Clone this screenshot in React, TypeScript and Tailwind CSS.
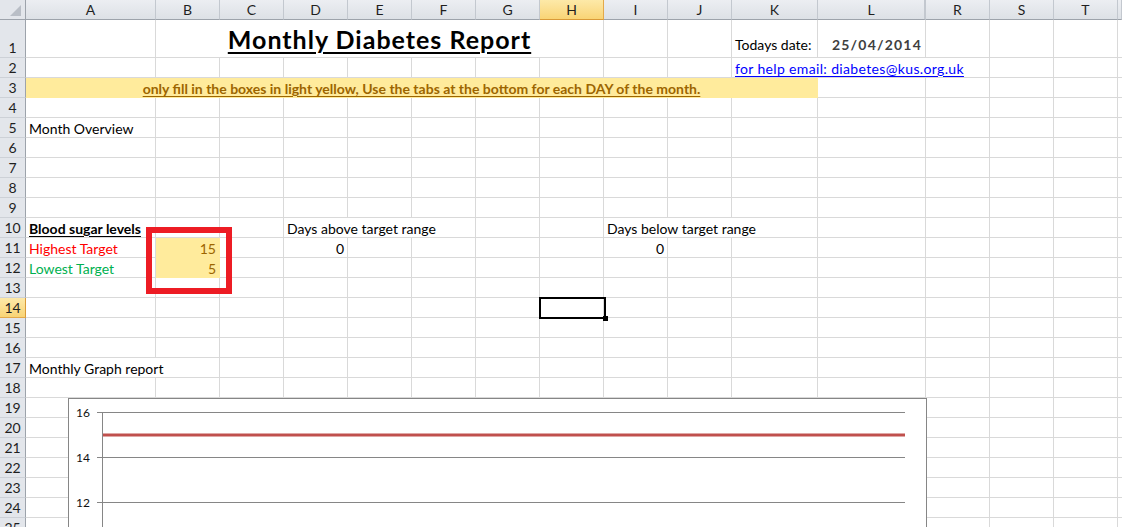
import React from "react";

type Cell = { c: number; span?: string; cls?: string; content?: React.ReactNode };

const COLS = ["A", "B", "C", "D", "E", "F", "G", "H", "I", "J", "K", "L", "R", "S", "T", ""];

const YEL = "bg-[#ffeb9c] border-r-[#ffeb9c] border-b-[#ffeb9c]";

const DATA: Record<number, Cell[]> = {
  1: [
    {
      c: 1,
      span: "col-span-7",
      cls: "justify-center pb-[4px]",
      content: (
        <span className="text-[25px] leading-[28px] font-bold tracking-[1px] underline decoration-2 underline-offset-[3px] text-black">
          Monthly Diabetes Report
        </span>
      ),
    },
    { c: 10, cls: "pb-[4px]", content: "Todays date:" },
    { c: 11, cls: "justify-end pb-[4px] font-bold text-[#3f3f3f] tracking-[1.2px]", content: "25/04/2014" },
  ],
  2: [
    {
      c: 10,
      span: "col-span-3",
      content: (
        <span className="text-[#0000ff] underline underline-offset-[2px] tracking-[0.35px]">
          for help email: diabetes@kus.org.uk
        </span>
      ),
    },
  ],
  3: [
    {
      c: 0,
      span: "col-span-11",
      cls: `justify-center ${YEL}`,
      content: (
        <span className="font-bold underline underline-offset-[2px] text-[#9c6500]">
          only fill in the boxes in light yellow, Use the tabs at the bottom for each DAY of the month.
        </span>
      ),
    },
  ],
  5: [{ c: 0, content: "Month Overview" }],
  10: [
    { c: 0, content: <span className="font-bold underline underline-offset-[2px]">Blood sugar levels</span> },
    { c: 3, span: "col-span-3", content: "Days above target range" },
    { c: 8, span: "col-span-3", content: "Days below target range" },
  ],
  11: [
    { c: 0, cls: "text-[#ff0000]", content: "Highest Target" },
    { c: 1, cls: `justify-end text-[#9c6500] ${YEL}`, content: "15" },
    { c: 3, cls: "justify-end", content: "0" },
    { c: 8, cls: "justify-end", content: "0" },
  ],
  12: [
    { c: 0, cls: "text-[#00b050]", content: "Lowest Target" },
    { c: 1, cls: `justify-end text-[#9c6500] ${YEL}`, content: "5" },
  ],
  17: [{ c: 0, span: "col-span-2", content: "Monthly Graph report" }],
};

const SPAN_N: Record<string, number> = {
  "col-span-2": 2,
  "col-span-3": 3,
  "col-span-7": 7,
  "col-span-11": 11,
};

function Chart() {
  const ys = [
    { v: "16", y: 13.5 },
    { v: "14", y: 58.5 },
    { v: "12", y: 103.5 },
  ];
  return (
    <div className="absolute left-[68px] top-[398px] w-[859px] h-[140px] border border-[#868686] bg-white">
      <svg width="857" height="138" className="block">
        {ys.map((t) => (
          <g key={t.v}>
            <line x1="28" x2="836" y1={t.y} y2={t.y} stroke="#868686" strokeWidth="1" />
            <text
              x="21"
              y={t.y + 4}
              textAnchor="end"
              fontSize="12"
              fill="#111"
              fontFamily="Lato, 'Liberation Sans', sans-serif"
            >
              {t.v}
            </text>
          </g>
        ))}
        <line x1="33.5" x2="33.5" y1="13" y2="138" stroke="#868686" strokeWidth="1" />
        <line x1="34" x2="836" y1="36" y2="36" stroke="#c0504d" strokeWidth="3" />
      </svg>
    </div>
  );
}

export default function App() {
  const rows: number[] = [];
  for (let r = 1; r <= 25; r++) rows.push(r);

  const colHead =
    "flex items-center justify-center text-[14px] text-[#1f1f1f] bg-gradient-to-b from-[#eceef2] to-[#dde1e6] border-r border-b border-r-[#c3c8cf] border-b-[#9da3ab]";
  const colHeadSel =
    "flex items-center justify-center text-[14px] text-[#1f1f1f] bg-gradient-to-b from-[#fde9a8] to-[#f9d475] border-r border-b border-r-[#e3a94a] border-b-[#d99a38]";
  const rowHead =
    "flex items-end justify-center pb-[1px] text-[14px] leading-[16px] text-[#1f1f1f] bg-[#e3e6eb] border-r border-b border-r-[#9da3ab] border-b-[#cdd1d7]";
  const rowHeadSel =
    "flex items-end justify-center pb-[1px] text-[14px] leading-[16px] text-[#1f1f1f] bg-gradient-to-b from-[#fde9a8] to-[#f9d475] border-r border-b border-r-[#d99a38] border-b-[#e3a94a]";
  const cellBase =
    "flex items-end px-[3px] whitespace-nowrap overflow-visible text-[14px] leading-[16px] border-r border-b border-r-[#d9d9d9] border-b-[#d9d9d9]";

  return (
    <div
      className="relative w-[1122px] h-[527px] overflow-hidden bg-white text-black"
      style={{ fontFamily: "Lato, 'Liberation Sans', sans-serif" }}
    >
      <div className="grid grid-cols-[26px_130px_64px_64px_64px_64px_64px_64px_64px_64px_64px_86px_108px_64px_64px_64px_4px] grid-rows-[20px_38px_repeat(24,20px)]">
        {/* corner */}
        <div className="relative bg-[#e3e6eb] border-r border-b border-r-[#9da3ab] border-b-[#9da3ab]">
          <svg width="25" height="19" className="absolute left-0 top-0">
            <polygon points="21,5 21,16 10,16" fill="#b9bec6" />
          </svg>
        </div>
        {COLS.map((c, i) => (
          <div
            key={"h" + i}
            className={
              c === "H"
                ? colHeadSel
                : c === "L"
                ? `${colHead} border-r-2 border-r-[#9da3ab]`
                : colHead
            }
          >
            {c}
          </div>
        ))}

        {rows.map((r) => {
          const defs = DATA[r] || [];
          const cells: React.ReactNode[] = [];
          cells.push(
            <div key={"rh" + r} className={r === 14 ? rowHeadSel : rowHead}>
              {r}
            </div>
          );
          let i = 0;
          while (i < COLS.length) {
            const d = defs.find((x) => x.c === i);
            if (d) {
              const n = d.span ? SPAN_N[d.span] : 1;
              cells.push(
                <div key={r + "-" + i} className={`${cellBase} ${d.span || ""} ${d.cls || ""}`}>
                  {d.content}
                </div>
              );
              i += n;
            } else {
              cells.push(<div key={r + "-" + i} className={cellBase} />);
              i += 1;
            }
          }
          return cells;
        })}
      </div>

      {/* red highlight rectangle drawn on the sheet */}
      <div className="absolute left-[146px] top-[227px] w-[86px] h-[67px] border-[6px] border-[#ed1c24]" />

      {/* active cell H14 */}
      <div className="absolute left-[539px] top-[297px] w-[67px] h-[22px] border-2 border-black">
        <div className="absolute right-[-4px] bottom-[-4px] w-[5px] h-[5px] bg-black" />
      </div>

      <Chart />
    </div>
  );
}
